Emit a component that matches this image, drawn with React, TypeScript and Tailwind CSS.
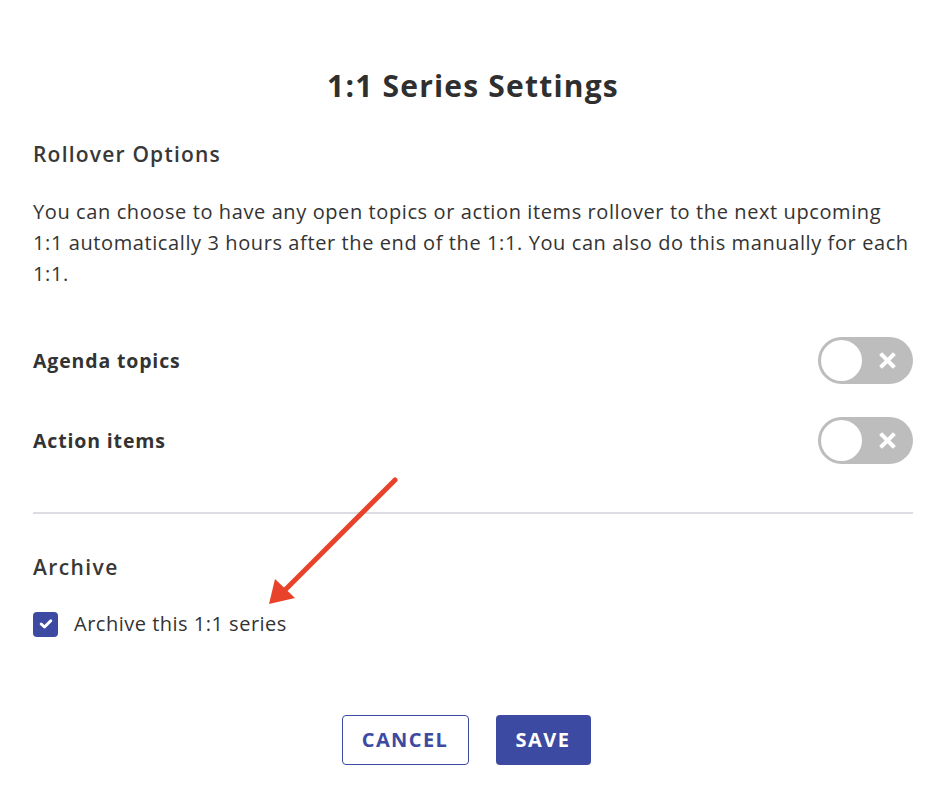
import React from "react";

function Toggle() {
  return (
    <div className="relative w-[95px] h-[47px] rounded-full bg-[#bdbdbd] flex items-center">
      <div className="ml-[1px] w-[45px] h-[45px] rounded-full bg-white border-2 border-[#bdbdbd]" />
      <svg className="absolute left-[61px] top-[15px]" width="17" height="17" viewBox="0 0 17 17">
        <path d="M3 3 L14 14 M14 3 L3 14" stroke="white" strokeWidth="4" strokeLinecap="square" />
      </svg>
    </div>
  );
}

export default function App() {
  return (
    <div
      className="relative w-[946px] h-[810px] bg-white px-[33px] pt-[68px] text-[#333333]"
      style={{ fontFamily: "'Open Sans', Lato, sans-serif" }}
    >
      <h1 className="text-center text-[30px] leading-[36px] font-bold tracking-[1.2px] text-[#2f2f2f]">1:1 Series Settings</h1>
      <h2 className="mt-[36px] text-[21px] leading-[28px] font-semibold tracking-[1.2px] text-[#383838]">Rollover Options</h2>
      <p className="mt-[28px] text-[20px] leading-[31px] tracking-[0.6px] text-[#333333]">
        You can choose to have any open topics or action items rollover to the next upcoming
        <br />
        1:1 automatically 3 hours after the end of the 1:1. You can also do this manually for each
        <br />
        1:1.
      </p>
      <div className="mt-[48px] flex items-center justify-between">
        <span className="text-[19.5px] font-bold tracking-[0.85px] text-[#333333]">Agenda topics</span>
        <Toggle />
      </div>
      <div className="mt-[33px] flex items-center justify-between">
        <span className="text-[19.5px] font-bold tracking-[0.85px] text-[#333333]">Action items</span>
        <Toggle />
      </div>
      <div className="mt-[48px] h-[2px] bg-[#dcdce3]" />
      <h2 className="mt-[39px] text-[21px] leading-[28px] font-semibold tracking-[1.4px] text-[#383838]">Archive</h2>
      <div className="mt-[28px] flex items-center gap-[16px]">
        <div className="w-[25px] h-[25px] rounded-[4px] bg-[#3d4aa1] flex items-center justify-center">
          <svg width="14" height="12" viewBox="0 0 14 12">
            <path d="M2.2 6 L5.5 9 L11.8 2.8" stroke="white" strokeWidth="3" fill="none" strokeLinecap="round" strokeLinejoin="round" />
          </svg>
        </div>
        <span className="text-[20px] tracking-[0.5px] text-[#333333]">Archive this 1:1 series</span>
      </div>
      <div className="mt-[76px] mr-[14px] flex justify-center gap-[27px]">
        <button className="w-[127px] h-[50px] rounded-[4px] border border-[#3d4aa1] bg-white text-[#3d4aa1] text-[20px] font-bold tracking-[1.4px]">
          CANCEL
        </button>
        <button className="w-[95px] h-[50px] rounded-[4px] bg-[#3d4aa1] text-white text-[20px] font-bold tracking-[1.5px]">SAVE</button>
      </div>
      <svg className="absolute left-0 top-0 pointer-events-none" width="946" height="810" viewBox="0 0 946 810">
        <line x1="395" y1="480" x2="285" y2="590" stroke="#e8432a" strokeWidth="5" strokeLinecap="round" />
        <polygon points="269,604 275,579 295,598" fill="#e8432a" />
      </svg>
    </div>
  );
}
